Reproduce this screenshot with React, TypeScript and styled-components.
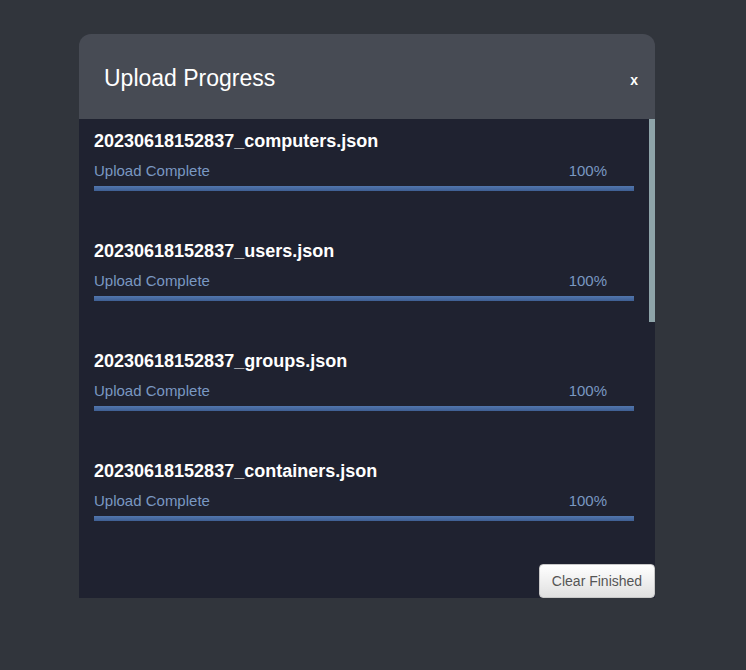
import React from "react";
import styled, { createGlobalStyle } from "styled-components";

const Global = createGlobalStyle`
  html, body { margin: 0; padding: 0; background: #31353c; }
  body { font-family: "Liberation Sans", Arial, sans-serif; }
`;

const Page = styled.div`
  padding: 34px 0 0 79px;
  min-height: 670px;
  box-sizing: border-box;
`;

const Modal = styled.div`
  width: 576px;
`;

const Header = styled.div`
  height: 85px;
  box-sizing: border-box;
  background: #474b54;
  border-radius: 12px 12px 0 0;
  display: flex;
  align-items: center;
  justify-content: space-between;
  padding: 3px 17px 0 25px;
`;

const Title = styled.h1`
  margin: 0;
  font-size: 23px;
  font-weight: normal;
  color: #ffffff;
`;

const Close = styled.button`
  background: none;
  border: none;
  padding: 0;
  margin-top: 4px;
  color: #ffffff;
  font-family: "Liberation Sans", Arial, sans-serif;
  font-size: 14px;
  font-weight: bold;
  cursor: pointer;
`;

const ScrollFrame = styled.div`
  position: relative;
  height: 440px;
  background: #1f2230;
`;

const ScrollBody = styled.div`
  height: 100%;
  overflow-y: auto;
  padding-right: 6px;
  box-sizing: border-box;
  scrollbar-width: none;
  &::-webkit-scrollbar { display: none; }
`;

const Thumb = styled.div`
  position: absolute;
  top: 0;
  right: 0;
  width: 6px;
  background: #8ea4a9;
`;

const Item = styled.div`
  padding: 11px 15px 38px 15px;
`;

const FileName = styled.div`
  font-size: 18px;
  font-weight: bold;
  line-height: 22px;
  color: #ffffff;
`;

const StatusRow = styled.div`
  display: flex;
  justify-content: space-between;
  margin-top: 10px;
  padding-right: 27px;
  font-size: 15px;
  line-height: 18px;
  color: #7a98c2;
`;

const Bar = styled.div`
  margin-top: 6px;
  height: 5px;
  background: #2b3040;
`;

const Fill = styled.div`
  height: 100%;
  background: linear-gradient(to bottom, #5176ad, #3f5f93);
`;

const Footer = styled.div`
  height: 39px;
  display: flex;
  justify-content: flex-end;
  align-items: flex-end;
  background: #1f2230;
`;

const ClearButton = styled.button`
  width: 116px;
  height: 34px;
  border: 1px solid #c8c8c8;
  border-radius: 4px;
  background: linear-gradient(to bottom, #ffffff, #e0e0e0);
  color: #555555;
  font-family: "Liberation Sans", Arial, sans-serif;
  font-size: 14px;
  cursor: pointer;
`;

const files = [
  "computers",
  "users",
  "groups",
  "containers",
  "domains",
  "gpos",
  "ous",
  "aiacas",
  "rootcas",
];

export default function App() {
  return (
    <>
      <Global />
      <Page>
        <Modal>
          <Header>
            <Title>Upload Progress</Title>
            <Close>x</Close>
          </Header>
          <ScrollFrame>
            <ScrollBody>
              {files.map((f) => (
                <Item key={f}>
                  <FileName>20230618152837_{f}.json</FileName>
                  <StatusRow>
                    <span>Upload Complete</span>
                    <span>100%</span>
                  </StatusRow>
                  <Bar>
                    <Fill style={{ width: "100%" }} />
                  </Bar>
                </Item>
              ))}
            </ScrollBody>
            <Thumb style={{ height: 203 }} />
          </ScrollFrame>
          <Footer>
            <ClearButton>Clear Finished</ClearButton>
          </Footer>
        </Modal>
      </Page>
    </>
  );
}
